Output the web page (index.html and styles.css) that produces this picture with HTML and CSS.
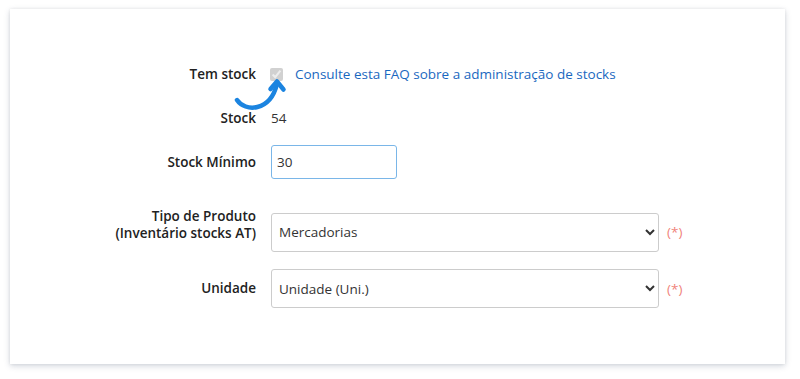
FILE: index.html
```html
<!DOCTYPE html>
<html>
  <head>
    <meta charset="utf-8" />
    <title>Stock</title>
    <link rel="stylesheet" href="styles.css">
  </head>
  <body>
    <div class="card">
      <div class="row row-check">
        <label class="lbl">Tem stock</label>
        <div class="field">
          <span class="check-wrap">
            <input type="checkbox" checked disabled />
            <!-- seta de ajuda -->
            <svg class="arrow" width="60" height="45" viewBox="0 0 60 45">
              <path d="M6 28 C14 40 39 40 46 12" fill="none" stroke="#1b84e0" stroke-width="4.5" stroke-linecap="round" />
              <path d="M39.5 17 L46 9.5 L52.5 17.5" fill="none" stroke="#1b84e0" stroke-width="4.5" stroke-linecap="round" stroke-linejoin="round" />
            </svg>
          </span>
          <a class="faq" href="#">Consulte esta FAQ sobre a administração de stocks</a>
        </div>
      </div>
      <div class="row row-stock">
        <label class="lbl">Stock</label>
        <div class="field">54</div>
      </div>
      <div class="row row-min">
        <label class="lbl">Stock Mínimo</label>
        <div class="field">
          <input class="inp" type="text" value="30" />
        </div>
      </div>
      <div class="row row-tipo">
        <label class="lbl lbl-two">Tipo de Produto<br />(Inventário stocks AT)</label>
        <div class="field">
          <select class="sel">
            <option>Mercadorias</option>
          </select>
          <span class="req">(*)</span>
        </div>
      </div>
      <div class="row row-uni">
        <label class="lbl">Unidade</label>
        <div class="field">
          <select class="sel">
            <option>Unidade (Uni.)</option>
          </select>
          <span class="req">(*)</span>
        </div>
      </div>
    </div>
  </body>
</html>
```
FILE: styles.css
```css
html,
body {
  margin: 0;
  padding: 0;
  background: #fff;
}
body {
  font-family: "Open Sans", "Liberation Sans", sans-serif;
  font-size: 13.5px;
  color: #333;
  padding: 9px 15px 15px 10px;
  min-height: 100vh;
  box-sizing: border-box;
}
.card {
  height: 355px;
  box-sizing: border-box;
  background: #fff;
  padding-top: 55px;
  box-shadow: 0 2px 6px rgba(50, 70, 100, 0.22), 0 0 3px rgba(0, 0, 0, 0.07);
}
.row {
  display: flex;
  align-items: center;
}
.lbl {
  width: 246px;
  flex: none;
  text-align: right;
  font-weight: 600;
  color: #222;
  line-height: 17px;
}
.field {
  display: flex;
  align-items: center;
  margin-left: 15px;
  line-height: 20px;
}
.row-check {
  height: 20px;
}
.row-check .field {
  margin-left: 14px;
}
.check-wrap {
  position: relative;
  display: inline-flex;
}
.check-wrap input {
  margin: 0;
  width: 13px;
  height: 13px;
}
.arrow {
  position: absolute;
  left: -39px;
  top: 4px;
}
.faq {
  color: #1a68c0;
  text-decoration: none;
  margin-left: 12px;
}
.row-stock {
  margin-top: 24px;
  height: 20px;
}
.row-min {
  margin-top: 17px;
}
.inp {
  width: 126px;
  height: 34px;
  box-sizing: border-box;
  border: 1px solid #7ab6e8;
  border-radius: 3px;
  padding: 0 5px;
  font-family: inherit;
  font-size: 13.5px;
  color: #333;
  outline: none;
}
.row-tipo {
  margin-top: 29px;
}
.lbl-two {
  margin-bottom: 14px;
}
.row-uni {
  margin-top: 13px;
}
.sel {
  width: 388px;
  height: 39px;
  box-sizing: border-box;
  border: 1px solid #ccc;
  border-radius: 3px;
  background: #fff;
  padding: 0 3px;
  font-family: inherit;
  font-size: 13.5px;
  color: #333;
}
.req {
  color: #f0837b;
  margin-left: 8px;
}
```
